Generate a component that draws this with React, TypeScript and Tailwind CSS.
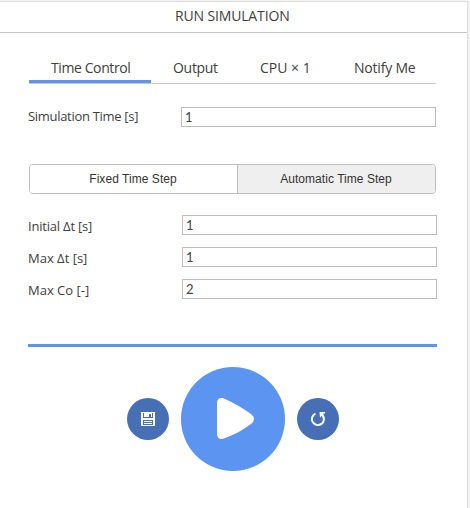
const label = "w-[153px] text-[13px] leading-5 whitespace-nowrap";
const input =
  "h-5 w-[255px] border border-[#bdbdbd] bg-white px-[3px] font-['Lato','Noto_Sans',sans-serif] text-[13px] text-[#444] outline-none";

function Field({ name, value, spacing }: { name: string; value: string; spacing: string }) {
  return (
    <div className="flex h-5 w-[409px]">
      <label className={`${label} pt-[1px]`}>
        <span className={`block w-max ${spacing}`}>{name}</span>
      </label>
      <input className={`ml-[1px] pb-[1px] ${input}`} defaultValue={value} />
    </div>
  );
}

function Tab({ name, className }: { name: string; className: string }) {
  return (
    <button className={`flex shrink-0 items-start whitespace-nowrap text-left text-[14px] leading-5 ${className}`}>
      <span className="block w-max">{name}</span>
    </button>
  );
}

export default function App() {
  return (
    <div className="h-[508px] w-[470px] overflow-hidden bg-[#f2f2f2] pt-[1px] font-['Open_Sans','Noto_Sans',sans-serif] text-[#404040]">
      <div className="h-[507px] w-[468px] border-t border-r border-[#dedede] bg-white">
        <header className="flex h-[31px] border-b border-[#c8c8c8] pt-1 pl-[175px] text-[14px] leading-5 tracking-[-0.15px]">
          <span>RUN SIMULATION</span>
        </header>
        <nav className="mt-[25px] ml-[29px] flex h-[26px] w-[407px] border-b border-[#c8c8c8]">
          <Tab name="Time Control" className="h-[25px] w-[122px] border-b-3 border-[#5c94f2] pl-[22px] tracking-[-0.4px]" />
          <Tab name="Output" className="w-[87px] pl-[22px] tracking-[-0.3px]" />
          <Tab name="CPU × 1" className="w-[94px] pl-[22px]" />
          <Tab name="Notify Me" className="pl-[22px] tracking-[-0.2px]" />
        </nav>
        <div className="mt-[23px] ml-7 flex h-5">
          <label className={`${label} -mt-[1px]`}>
            <span className="block w-max tracking-[-0.3px]">Simulation Time [s]</span>
          </label>
          <input className={input} defaultValue="1" />
        </div>
        <div className="mt-[37px] ml-[29px] flex h-[30px] w-[407px] overflow-hidden rounded border border-[#bdbdbd] font-['Liberation_Sans',sans-serif] text-[12px] tracking-[0.05px] text-[#333]">
          <button className="w-[208px] border-r border-[#bdbdbd] bg-white pr-[1px]">Fixed Time Step</button>
          <button className="flex-1 bg-[#efefef] pr-[1px]">Automatic Time Step</button>
        </div>
        <div className="mt-[21px] ml-7 flex flex-col gap-3">
          <Field name="Initial Δt [s]" value="1" spacing="tracking-[-0.2px]" />
          <Field name="Max Δt [s]" value="1" spacing="tracking-normal" />
          <Field name="Max Co [-]" value="2" spacing="tracking-normal" />
        </div>
        <div className="mt-[45px] ml-7 h-[3px] w-[409px] bg-[#5c94f2]" />
        <div className="mt-5 ml-[127px] flex items-center gap-3">
          <button className="flex size-[42px] items-center justify-center rounded-full bg-[#466fb5]" aria-label="Save">
            <svg width="14" height="14" viewBox="0 0 14 14" shapeRendering="crispEdges">
              <path fill="#fff" fillRule="evenodd" d="M0 0h14v14H0zM2 1v5h10V1zM2 8v5h10V8z" />
              <path fill="#fff" d="M3 9h8v1H3zM3 11h8v1H3zM3 1h8v4H3z" />
              <path fill="#466fb5" d="M8 2h2v3H8z" />
            </svg>
          </button>
          <button className="flex size-[104px] items-center justify-center rounded-full bg-[#5c94f2]" aria-label="Run">
            <svg width="104" height="104" viewBox="0 0 104 104">
              <path fill="#fff" d="M36 36C36 32 39 30 43 31.500C53 36 62 41 70 47Q76 52 70 57C62 63 53 68 43 71.500C39 73 36 71 36 67Z" />
            </svg>
          </button>
          <button className="flex size-[42px] items-center justify-center rounded-full bg-[#466fb5]" aria-label="Reset">
            <svg width="42" height="42" viewBox="0 0 42 42">
              <path fill="none" stroke="#fff" strokeWidth="2" d="M18.500 15.600A6 6 0 1 0 25.300 17" />
              <path fill="#fff" d="M22.500 14H28V15.500L26 15.800L27 19L25.500 19.500L24.500 17.500L23 20Z" />
            </svg>
          </button>
        </div>
      </div>
    </div>
  );
}
